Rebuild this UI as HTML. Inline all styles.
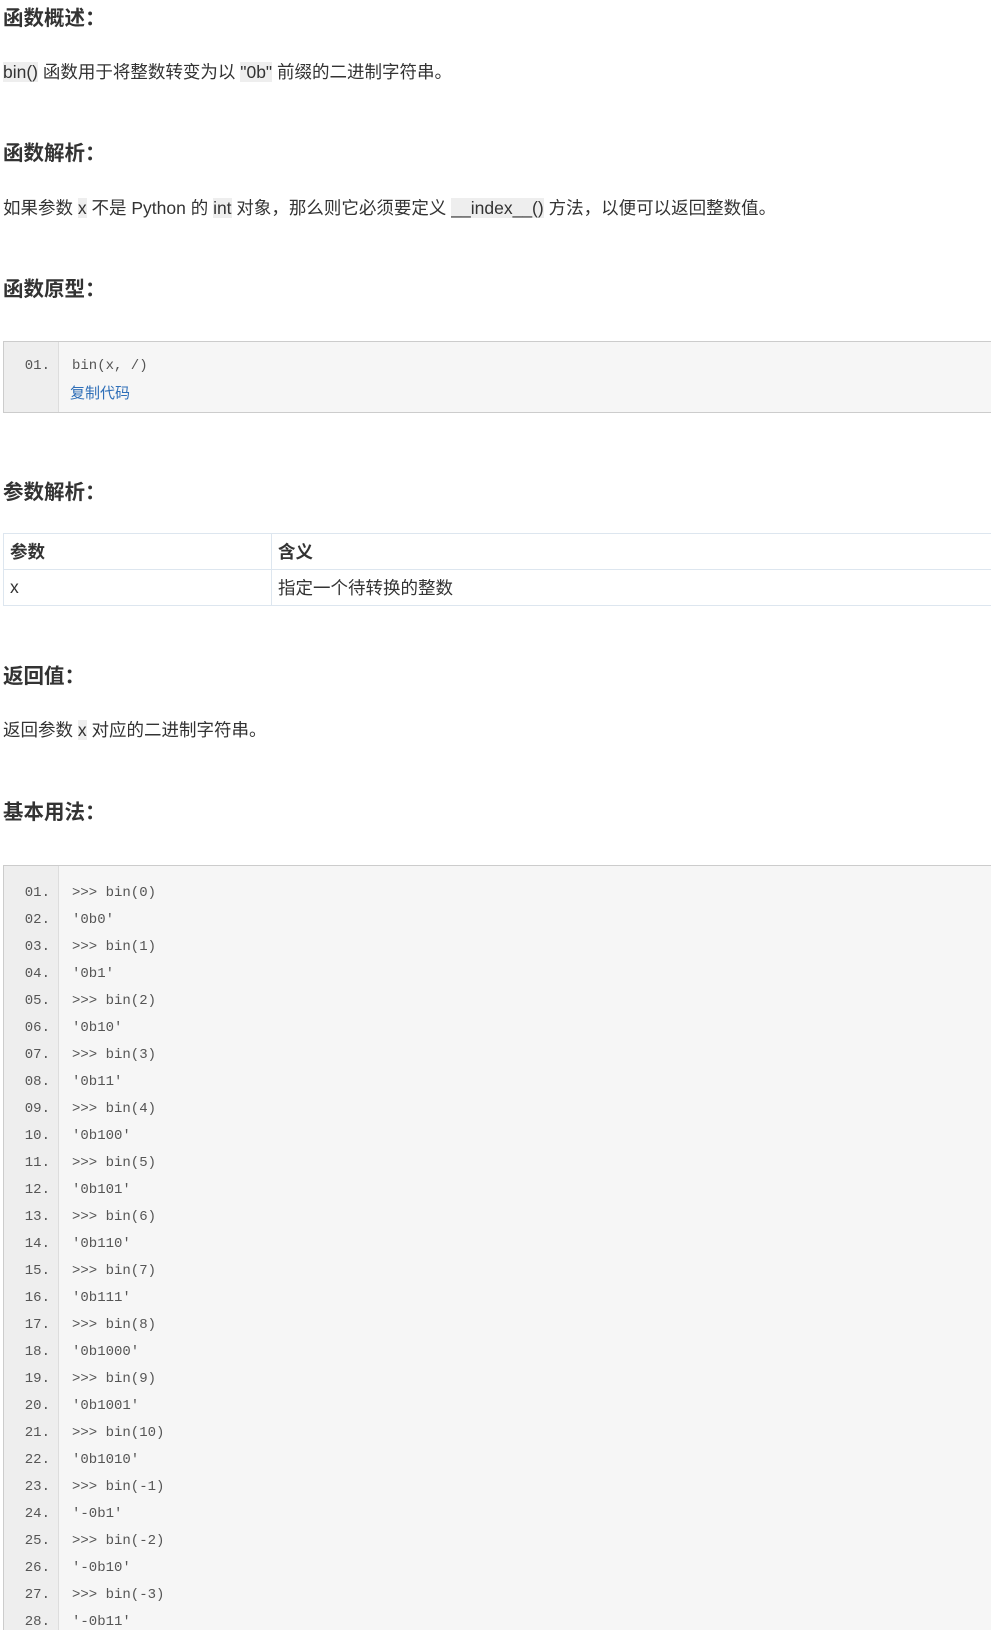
<!DOCTYPE html>
<html style="height:1630px;overflow:hidden"><head><meta charset="utf-8"><style>
body{margin:0;width:991px;height:1630px;overflow:hidden;position:relative;background:#fff;font-family:"Liberation Sans","Noto Sans CJK SC",sans-serif;color:#333;}
.a{position:absolute;left:3px;white-space:nowrap;}
h{font-size:20.5px;font-weight:bold;color:#333;line-height:26px;}
.p{font-size:17.5px;line-height:24px;color:#333;}
code{background:#eee;font-family:"Liberation Sans","Noto Sans CJK SC",sans-serif;font-size:17.5px;}
.cb{position:absolute;left:3px;right:0;background:#f6f6f6;border:1px solid #ccc;border-right:none;overflow:hidden;}
.g{position:absolute;left:0;top:0;bottom:0;width:54px;background:#eee;border-right:1px solid #ddd;}
.ln{position:absolute;left:0;width:46px;text-align:right;font-family:"Liberation Mono",monospace;font-size:14px;color:#555;}
.cd{position:absolute;left:68px;font-family:"Liberation Mono",monospace;font-size:14px;color:#555;white-space:pre;}
table{position:absolute;left:3px;top:533px;width:988px;border-collapse:collapse;font-size:17.5px;}
td{border:1px solid #dde6ef;height:35px;padding:0 6px;border-right:none;}
</style></head><body>
<div class="a" style="top:6px"><h>函数概述：</h></div>
<div class="a p" style="top:60px"><code>bin()</code> 函数用于将整数转变为以 <code>"0b"</code> 前缀的二进制字符串。</div>
<div class="a" style="top:141px"><h>函数解析：</h></div>
<div class="a p" style="top:196px">如果参数 <code>x</code> 不是 Python 的 <code>int</code> 对象，那么则它必须要定义 <code>__index__()</code> 方法，以便可以返回整数值。</div>
<div class="a" style="top:277px"><h>函数原型：</h></div>
<div class="cb" style="top:341px;height:70px"><div class="g"></div>
<div class="ln" style="top:16px">01.</div><div class="cd" style="top:16px">bin(x, /)</div>
<div style="position:absolute;left:66px;top:40px;font-size:15px;color:#2f6fb8">复制代码</div></div>
<div class="a" style="top:480px"><h>参数解析：</h></div>
<table><tr><td style="width:255px;border-left:1px solid #dde6ef"><b>参数</b></td><td><b>含义</b></td></tr>
<tr><td style="border-left:1px solid #dde6ef">x</td><td>指定一个待转换的整数</td></tr></table>
<div class="a" style="top:664px"><h>返回值：</h></div>
<div class="a p" style="top:718px">返回参数 <code>x</code> 对应的二进制字符串。</div>
<div class="a" style="top:800px"><h>基本用法：</h></div>
<div class="cb" style="top:865px;height:770px"><div class="g"></div>
<div class="ln" style="top:14px;line-height:27px;white-space:pre">01.
02.
03.
04.
05.
06.
07.
08.
09.
10.
11.
12.
13.
14.
15.
16.
17.
18.
19.
20.
21.
22.
23.
24.
25.
26.
27.
28.</div>
<div class="cd" style="top:14px;line-height:27px">&gt;&gt;&gt; bin(0)
'0b0'
&gt;&gt;&gt; bin(1)
'0b1'
&gt;&gt;&gt; bin(2)
'0b10'
&gt;&gt;&gt; bin(3)
'0b11'
&gt;&gt;&gt; bin(4)
'0b100'
&gt;&gt;&gt; bin(5)
'0b101'
&gt;&gt;&gt; bin(6)
'0b110'
&gt;&gt;&gt; bin(7)
'0b111'
&gt;&gt;&gt; bin(8)
'0b1000'
&gt;&gt;&gt; bin(9)
'0b1001'
&gt;&gt;&gt; bin(10)
'0b1010'
&gt;&gt;&gt; bin(-1)
'-0b1'
&gt;&gt;&gt; bin(-2)
'-0b10'
&gt;&gt;&gt; bin(-3)
'-0b11'</div></div>
</body></html>
